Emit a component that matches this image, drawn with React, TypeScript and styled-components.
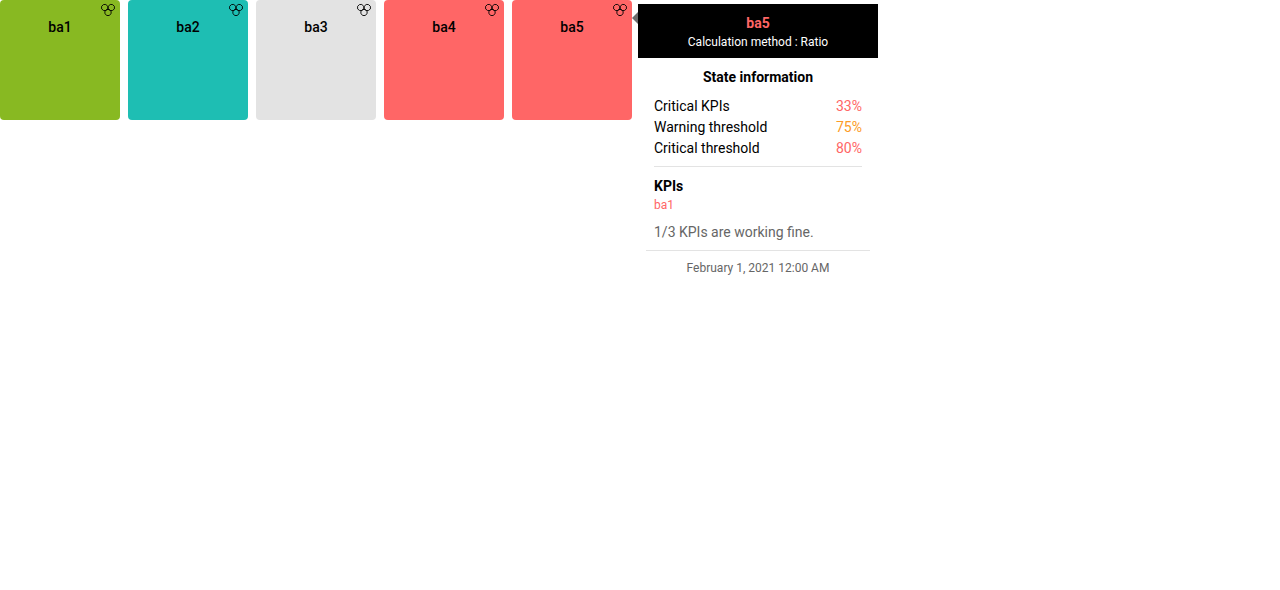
import React from 'react';
import styled, { createGlobalStyle } from 'styled-components';

const colors = {
  ok: '#88b922',
  pending: '#1ebeb3',
  unknown: '#e3e3e3',
  critical: '#ff6666',
  warning: '#fd9b27',
};

type Status = keyof typeof colors;

const GlobalStyle = createGlobalStyle`
  *, *::before, *::after { box-sizing: border-box; }
  body {
    margin: 0;
    background: #fff;
    color: #000;
    font-family: Roboto, sans-serif;
    font-size: 14px;
    line-height: 21px;
  }
  h2, h3, p, dl, dd, ul { margin: 0; padding: 0; }
  ul { list-style: none; }
`;

const Page = styled.main`
  min-height: 100vh;
`;

const Grid = styled.ul`
  display: grid;
  grid-template-columns: repeat(auto-fill, 120px);
  gap: 8px;
`;

const Cell = styled.li`
  position: relative;
`;

const Tile = styled.a<{ $status: Status }>`
  display: flex;
  flex-direction: column;
  height: 120px;
  padding: 4px;
  border-radius: 4px;
  background: ${({ $status }) => colors[$status]};
  color: #000;
  text-decoration: none;
`;

const TileIcon = styled.svg`
  align-self: flex-end;
  width: 16px;
  height: 12px;
  overflow: visible;
`;

const TileName = styled.span`
  font-weight: 500;
  line-height: 22px;
  text-align: center;
`;

const Tooltip = styled.section`
  position: absolute;
  top: 4px;
  left: 100%;
  width: 240px;
  margin-left: 6px;
  background: #fff;
`;

const Arrow = styled.span`
  position: absolute;
  top: 8px;
  right: 100%;
  border: solid transparent;
  border-width: 6px 6px 6px 0;
  border-right-color: #6c6c6c;
`;

const Header = styled.header`
  padding: 8px;
  background: #000;
  color: #fff;
  text-align: center;
`;

const HeaderTitle = styled.h2`
  color: ${colors.critical};
  font-size: 14px;
  font-weight: 700;
  line-height: 22px;
`;

const Method = styled.p`
  font-size: 12px;
  line-height: 16px;
`;

const Body = styled.div`
  padding: 8px 16px 7px;
`;

const SectionTitle = styled.h3<{ $centered?: boolean }>`
  font-size: 14px;
  font-weight: 700;
  line-height: 22px;
  text-align: ${({ $centered }) => ($centered ? 'center' : 'left')};
`;

const Stats = styled.dl`
  margin: 8px 0;
  padding-bottom: 7px;
  border-bottom: 1px solid #e3e3e3;
`;

const Stat = styled.div`
  display: flex;
  justify-content: space-between;
`;

const Value = styled.dd<{ $status: Status }>`
  color: ${({ $status }) => colors[$status]};
`;

const KpiLink = styled.a`
  display: block;
  color: ${colors.critical};
  font-size: 12px;
  line-height: 16px;
  text-decoration: none;
`;

const Summary = styled.p`
  margin-top: 9px;
  color: #666;
`;

const Footer = styled.footer`
  margin: 0 8px;
  padding: 9px 8px 8px;
  border-top: 1px solid #e3e3e3;
  color: #666;
  font-size: 12px;
  line-height: 16px;
  text-align: center;
`;

const tiles: { name: string; status: Status }[] = [
  { name: 'ba1', status: 'ok' },
  { name: 'ba2', status: 'pending' },
  { name: 'ba3', status: 'unknown' },
  { name: 'ba4', status: 'critical' },
  { name: 'ba5', status: 'critical' },
];

const stats: { label: string; value: string; status: Status }[] = [
  { label: 'Critical KPIs', value: '33%', status: 'critical' },
  { label: 'Warning threshold', value: '75%', status: 'warning' },
  { label: 'Critical threshold', value: '80%', status: 'critical' },
];

const BusinessActivityIcon = () => (
  <TileIcon viewBox="0 0 16 12" aria-hidden="true" fill="none" stroke="#000" strokeWidth=".9">
    <path d="M3.6.5h2.2l2 1.8v2.6l-2 1.6H3.6l-2-1.600V2.300z" />
    <path d="M10.200.5h2.200l2 1.800v2.600l-2 1.600h-2.200l-2-1.600V2.300z" />
    <path d="M6.900 5.500h2.200l2 1.700v2.500l-2 1.800H6.900l-2-1.800V7.200z" />
  </TileIcon>
);

const StateTooltip = () => (
  <Tooltip role="tooltip">
    <Arrow />
    <Header>
      <HeaderTitle>ba5</HeaderTitle>
      <Method>Calculation method : Ratio</Method>
    </Header>
    <Body>
      <SectionTitle $centered>State information</SectionTitle>
      <Stats>
        {stats.map(({ label, value, status }) => (
          <Stat key={label}>
            <dt>{label}</dt>
            <Value $status={status}>{value}</Value>
          </Stat>
        ))}
      </Stats>
      <SectionTitle>KPIs</SectionTitle>
      <KpiLink href="#ba1">ba1</KpiLink>
      <Summary>1/3 KPIs are working fine.</Summary>
    </Body>
    <Footer>February 1, 2021 12:00 AM</Footer>
  </Tooltip>
);

export default function App() {
  return (
    <Page>
      <GlobalStyle />
      <Grid>
        {tiles.map(({ name, status }) => (
          <Cell key={name}>
            <Tile href={`#${name}`} $status={status}>
              <BusinessActivityIcon />
              <TileName>{name}</TileName>
            </Tile>
            {name === 'ba5' && <StateTooltip />}
          </Cell>
        ))}
      </Grid>
    </Page>
  );
}
